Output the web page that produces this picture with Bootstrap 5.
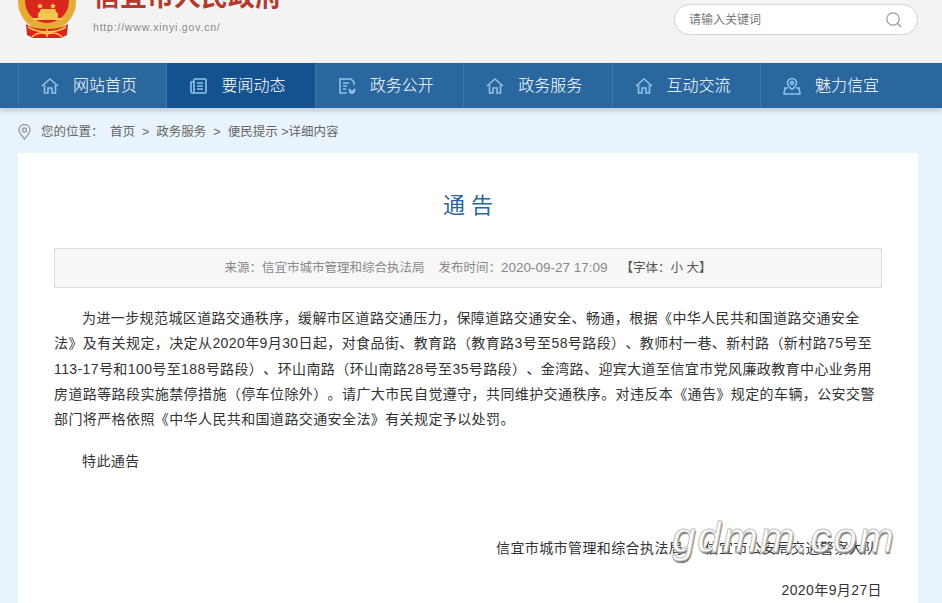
<!DOCTYPE html>
<html lang="zh-CN">
<head>
    <meta charset="UTF-8">
    <title>通告 - 信宜市人民政府</title>
    <link href="https://cdn.jsdelivr.net/npm/bootstrap@5.3.3/dist/css/bootstrap.min.css" rel="stylesheet">
    <script src="https://cdn.jsdelivr.net/npm/bootstrap@5.3.3/dist/js/bootstrap.bundle.min.js"></script>
    <style>
        body {
            background: #e9f3fb;
            font-family: "Liberation Sans", "Noto Sans CJK SC", sans-serif;
            color: #333;
            overflow: hidden;
            text-spacing-trim: space-all;
        }
        .top-head {
            height: 63px;
            background: #f3f3f3;
            padding: 0 24px 0 18px;
            overflow: hidden;
        }
        .emblem { width: 58px; height: 40px; flex: none; }
        .site-title {
            margin: -19px 0 0 17px;
        }
        .site-name {
            font-size: 27px;
            line-height: 32px;
            font-weight: 700;
            color: #b33b2e;
        }
        .site-url {
            font-size: 10.5px;
            letter-spacing: .8px;
            line-height: 12px;
            margin-top: 8px;
            color: #888;
        }
        .search-box {
            width: 244px;
            height: 31px;
            margin-top: 4px;
            padding: 0 14px;
            background: #fff;
            border: 1px solid #d2d2d8;
            border-radius: 16px;
            font-size: 12px;
            color: #777;
        }
        .main-nav {
            height: 45px;
            padding-left: 18px;
            background: #2a679f;
            box-shadow: 0 3px 5px rgba(90, 110, 130, .3);
        }
        .nav-cell {
            width: 148.4px;
            gap: 14px;
            padding-left: 22px;
            border-left: 1px solid #3f78ad;
            font-size: 16px;
            font-weight: 300;
            color: #fff;
        }
        .nav-cell svg { width: 18px; height: 18px; flex: none; }
        .nav-cell.on { background: #14528f; }
        .crumbs {
            height: 45px;
            padding: 3px 0 0 18px;
            gap: 10px;
            font-size: 12.500px;
            color: #666;
        }
        .crumbs i { font-style: normal; margin-left: 3px; }
        .crumbs b { font-weight: 400; margin: 0 7px; }
        .paper {
            position: relative;
            margin: 0 24px 0 18px;
            padding: 0 36px;
            height: 460px;
            background: #fff;
        }
        .paper-title {
            padding-top: 38px;
            height: 95px;
            text-align: center;
            font-size: 22px;
            line-height: 30px;
            color: #2a679f;
        }
        .info-bar {
            height: 40px;
            background: #f7f7f7;
            border: 1px solid #ddd;
            font-size: 12.500px;
            color: #888;
        }
        .info-bar .stamp { font-size: 13.500px; }
        .info-bar .size-tools { color: #555; margin-left: 13px; }
        .doc-body {
            margin-top: 18px;
            font-size: 14px;
            line-height: 25.300px;
            letter-spacing: .4px;
            color: #333;
        }
        .doc-body p { margin: 0; text-indent: 28px; }
        .doc-body p.closing { margin-top: 17px; }
        .sign-line { margin-top: 61px; padding-left: 442px; white-space: nowrap; }
        .date-line { margin-top: 17px; text-align: right; }
        .wm-text {
            position: absolute;
            left: 654px;
            top: 360px;
            font-size: 42px;
            line-height: 50px;
            font-style: italic;
            letter-spacing: 2px;
            color: #fff;
            -webkit-text-stroke: 1px #c2c2c2;
            text-shadow: 1px 2px 1px #707070;
        }
    </style>
</head>
<body>
<div class="top-head d-flex">
    <svg class="emblem" viewBox="0 0 58 40">
        <circle cx="29" cy="2" r="29" fill="#e6ad35"/>
        <circle cx="29" cy="1" r="22" fill="#d9261c"/>
        <path d="M22 3l1 2 2 0-1.500 1.500.5 2-2-1-2 1 .5-2L19 5h2zM35 3l1 2 2 0-1.500 1.500.5 2-2-1-2 1 .5-2L32 5h2z" fill="#f3cf5a"/>
        <path d="M23 9h14l2 4H21z" fill="#efc04a"/>
        <path d="M20 13h20v5H20zM15 18h30v2H15z" fill="#f2c850"/>
        <path d="M8 24q6 5 21 5t21-5l-1 11-6 3H15l-6-3z" fill="#d9261c"/>
        <path d="M10 27q8 5 19 5t19-5M14 37q6-6 15-3 9-3 15 3M29 29v8" fill="none" stroke="#f2c850" stroke-width="1.500"/>
    </svg>
    <div class="site-title">
        <div class="site-name">信宜市人民政府</div>
        <div class="site-url">http://www.xinyi.gov.cn/</div>
    </div>
    <div class="search-box ms-auto d-flex align-items-center justify-content-between">
        <span>请输入关键词</span>
        <svg width="18" height="18" viewBox="0 0 18 18" fill="none" stroke="#999" stroke-width="1.200"><circle cx="8" cy="8" r="6.200"/><path d="M12.500 12.500l3.500 3.500"/></svg>
    </div>
</div>

<nav class="main-nav d-flex">
    <div class="nav-cell d-flex align-items-center">
        <svg viewBox="0 0 18 18" fill="none" stroke="#8fc1ee" stroke-width="1.600"><path d="M1 9l8-7 8 7"/><path d="M3.500 8v8h3.500v-5h4v5h3.500V8"/></svg>网站首页
    </div>
    <div class="nav-cell on d-flex align-items-center">
        <svg viewBox="0 0 18 18" fill="none" stroke="#8fc1ee" stroke-width="1.600"><rect x="5" y="2" width="12" height="14" rx="1"/><path d="M5 5H2v10q0 1 1 1h2M8 6h6M8 9h6M8 12h6"/></svg>要闻动态
    </div>
    <div class="nav-cell d-flex align-items-center">
        <svg viewBox="0 0 18 18" fill="none" stroke="#8fc1ee" stroke-width="1.600"><path d="M16 8V5l-3-3H2v14h7"/><path d="M5 6h6M5 9h4M5 12h3"/><path d="M11 12l3 3 3-3-1.500 4h-3z" fill="#8fc1ee"/></svg>政务公开
    </div>
    <div class="nav-cell d-flex align-items-center">
        <svg viewBox="0 0 18 18" fill="none" stroke="#8fc1ee" stroke-width="1.600"><path d="M1 9l8-7 8 7"/><path d="M3.500 8v8h3.500v-5h4v5h3.500V8"/></svg>政务服务
    </div>
    <div class="nav-cell d-flex align-items-center">
        <svg viewBox="0 0 18 18" fill="none" stroke="#8fc1ee" stroke-width="1.600"><path d="M1 9l8-7 8 7"/><path d="M3.500 8v8h3.500v-5h4v5h3.500V8"/></svg>互动交流
    </div>
    <div class="nav-cell d-flex align-items-center">
        <svg viewBox="0 0 18 18" fill="none" stroke="#8fc1ee" stroke-width="1.600"><path d="M9 12.500C6 10 4.500 8.500 4.500 6a4.500 4.500 0 0 1 9 0c0 2.500-1.500 4-4.500 6.500z"/><circle cx="9" cy="6" r="1.500"/><path d="M5 11H2l-1 6h16l-1-6h-3"/></svg>魅力信宜
    </div>
</nav>

<div class="crumbs d-flex align-items-center">
    <svg width="13" height="16" viewBox="0 0 13 16" fill="none" stroke="#999" stroke-width="1.300"><path d="M6.500 15C3 11 1 8.500 1 6a5.500 5.500 0 0 1 11 0c0 2.500-2 5-5.500 9z"/><circle cx="6.500" cy="6" r="2"/></svg>
    <div>您的位置：<i>&nbsp;</i>首页<b>&gt;</b>政务服务<b>&gt;</b>便民提示 &gt;详细内容</div>
</div>

<main class="paper">
    <h1 class="paper-title fw-normal m-0">通 告</h1>
    <div class="info-bar d-flex align-items-center justify-content-center">
        来源：信宜市城市管理和综合执法局&nbsp;&nbsp;&nbsp;&nbsp;发布时间：<span class="stamp">2020-09-27 17:09</span><span class="size-tools">【字体：小 大】</span>
    </div>
    <div class="doc-body">
        <p>为进一步规范城区道路交通秩序，缓解市区道路交通压力，保障道路交通安全、畅通，根据《中华人民共和国道路交通安全法》及有关规定，决定从2020年9月30日起，对食品街、教育路（教育路3号至58号路段）、教师村一巷、新村路（新村路75号至113-17号和100号至188号路段）、环山南路（环山南路28号至35号路段）、金湾路、迎宾大道至信宜市党风廉政教育中心业务用房道路等路段实施禁停措施（停车位除外）。请广大市民自觉遵守，共同维护交通秩序。对违反本《通告》规定的车辆，公安交警部门将严格依照《中华人民共和国道路交通安全法》有关规定予以处罚。</p>
        <p class="closing">特此通告</p>
        <div class="sign-line">信宜市城市管理和综合执法局&nbsp;&nbsp;&nbsp;&nbsp;&nbsp;信宜市公安局交通警察大队</div>
        <div class="date-line">2020年9月27日</div>
    </div>
    <div class="wm-text">gdmm.com</div>
</main>
</body>
</html>
